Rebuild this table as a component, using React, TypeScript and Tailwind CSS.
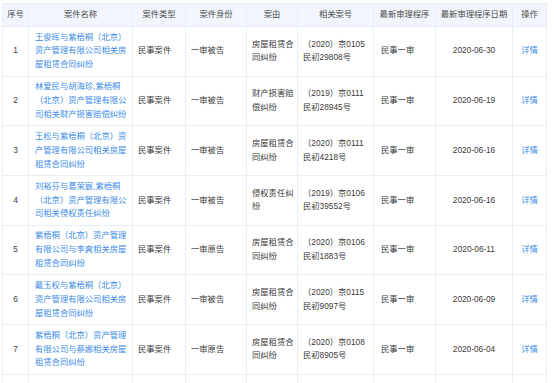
import React from "react";

type Row = {
  no: string;
  name: string[];
  type: string;
  role: string;
  cause: string[];
  caseNo: string[];
  proc: string;
  date: string;
};

const rows: Row[] = [
  {
    no: "1",
    name: ["王俊晖与紫梧桐（北京）", "资产管理有限公司相关房", "屋租赁合同纠纷"],
    type: "民事案件",
    role: "一审被告",
    cause: ["房屋租赁合", "同纠纷"],
    caseNo: ["（2020）京0105", "民初29808号"],
    proc: "民事一审",
    date: "2020-06-30",
  },
  {
    no: "2",
    name: ["林爱民与胡海珍,紫梧桐", "（北京）资产管理有限公", "司相关财产损害赔偿纠纷"],
    type: "民事案件",
    role: "一审被告",
    cause: ["财产损害赔", "偿纠纷"],
    caseNo: ["（2019）京0111", "民初28945号"],
    proc: "民事一审",
    date: "2020-06-19",
  },
  {
    no: "3",
    name: ["王松与紫梧桐（北京）资", "产管理有限公司相关房屋", "租赁合同纠纷"],
    type: "民事案件",
    role: "一审被告",
    cause: ["房屋租赁合", "同纠纷"],
    caseNo: ["（2020）京0111", "民初4218号"],
    proc: "民事一审",
    date: "2020-06-16",
  },
  {
    no: "4",
    name: ["刘裕芬与葛荣宸,紫梧桐", "（北京）资产管理有限公", "司相关侵权责任纠纷"],
    type: "民事案件",
    role: "一审被告",
    cause: ["侵权责任纠", "纷"],
    caseNo: ["（2019）京0106", "民初39552号"],
    proc: "民事一审",
    date: "2020-06-16",
  },
  {
    no: "5",
    name: ["紫梧桐（北京）资产管理", "有限公司与李爽相关房屋", "租赁合同纠纷"],
    type: "民事案件",
    role: "一审原告",
    cause: ["房屋租赁合", "同纠纷"],
    caseNo: ["（2020）京0106", "民初1883号"],
    proc: "民事一审",
    date: "2020-06-11",
  },
  {
    no: "6",
    name: ["戴玉权与紫梧桐（北京）", "资产管理有限公司相关房", "屋租赁合同纠纷"],
    type: "民事案件",
    role: "一审被告",
    cause: ["房屋租赁合", "同纠纷"],
    caseNo: ["（2020）京0115", "民初9097号"],
    proc: "民事一审",
    date: "2020-06-09",
  },
  {
    no: "7",
    name: ["紫梧桐（北京）资产管理", "有限公司与蔡娜相关房屋", "租赁合同纠纷"],
    type: "民事案件",
    role: "一审原告",
    cause: ["房屋租赁合", "同纠纷"],
    caseNo: ["（2020）京0108", "民初8905号"],
    proc: "民事一审",
    date: "2020-06-04",
  },
];

const headers = [
  "序号",
  "案件名称",
  "案件类型",
  "案件身份",
  "案由",
  "相关案号",
  "最新审理程序",
  "最新审理程序日期",
  "操作",
];

const widths = [26, 104, 53, 61, 51, 76, 62, 77, 34];

function Lines({ lines }: { lines: string[] }) {
  return (
    <>
      {lines.map((l, i) => (
        <span key={i} className="block whitespace-nowrap">
          {l}
        </span>
      ))}
    </>
  );
}

const td = "border border-[#e8eef6] align-middle";

export default function App() {
  return (
    <div
      className="bg-white w-[554px] h-[383px] overflow-hidden pt-[3px] pl-[2px]"
      style={{ fontFamily: '"Liberation Sans", "Noto Sans CJK SC", sans-serif' }}
    >
      <table className="table-fixed border-collapse w-[545px] text-[8.3px] leading-[13.8px] text-[#3a3a3a]">
        <colgroup>
          {widths.map((w, i) => (
            <col key={i} style={{ width: w }} />
          ))}
        </colgroup>
        <thead>
          <tr className="h-[23px] bg-[#f2f6fc]">
            {headers.map((h) => (
              <th
                key={h}
                className={`${td} font-normal text-center text-[#4a4a4a] whitespace-nowrap px-0`}
              >
                {h}
              </th>
            ))}
          </tr>
        </thead>
        <tbody>
          {rows.map((r) => (
            <tr key={r.no} className="h-[49.7px]">
              <td className={`${td} text-center`}>{r.no}</td>
              <td className={`${td} pl-[6px] text-[#3d8ce6]`}>
                <Lines lines={r.name} />
              </td>
              <td className={`${td} pl-[5px] whitespace-nowrap`}>{r.type}</td>
              <td className={`${td} pl-[5px] whitespace-nowrap`}>{r.role}</td>
              <td className={`${td} pl-[5px]`}>
                <Lines lines={r.cause} />
              </td>
              <td className={`${td} pl-[5px]`}>
                <Lines lines={r.caseNo} />
              </td>
              <td className={`${td} pl-[7px] whitespace-nowrap`}>{r.proc}</td>
              <td className={`${td} text-center whitespace-nowrap`}>{r.date}</td>
              <td className={`${td} text-center text-[#3d8ce6] whitespace-nowrap`}>详情</td>
            </tr>
          ))}
          <tr className="h-[49.7px]">
            {widths.map((_, i) => (
              <td key={i} className={td}></td>
            ))}
          </tr>
        </tbody>
      </table>
    </div>
  );
}
